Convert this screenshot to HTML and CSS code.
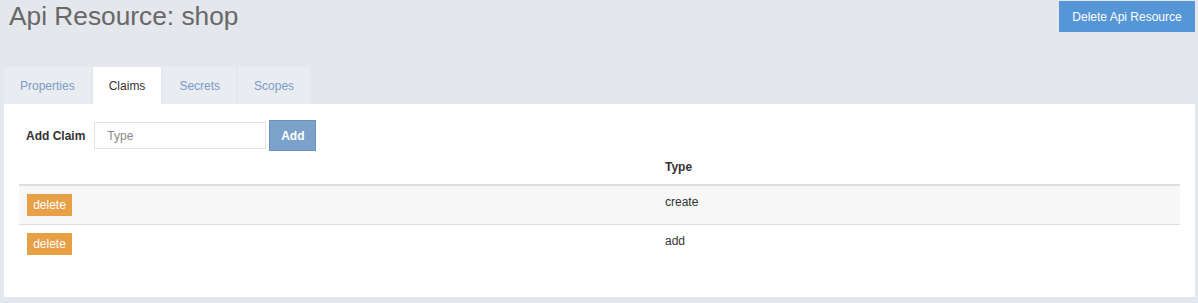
FILE: index.html
```html
<!DOCTYPE html>
<html lang="en">
<head>
    <meta charset="UTF-8">
    <meta name="viewport" content="width=device-width, initial-scale=1.0">
    <title>Api Resource: shop</title>
    <link rel="stylesheet" href="styles.css">
</head>
<body>
    <div class="page">
        <div class="page-header">
            <h1 class="page-title">Api Resource: shop</h1>
            <button class="btn btn-primary">Delete Api Resource</button>
        </div>

        <!-- Tabs -->
        <ul class="tabs">
            <li class="tab">Properties</li>
            <li class="tab active">Claims</li>
            <li class="tab">Secrets</li>
            <li class="tab">Scopes</li>
        </ul>

        <div class="panel">
            <form class="add-form" onsubmit="return false">
                <label class="add-label">Add Claim</label>
                <input class="add-input" type="text" placeholder="Type">
                <button class="btn btn-add">Add</button>
            </form>

            <table class="claims-table">
                <thead>
                    <tr>
                        <th class="col-action"></th>
                        <th>Type</th>
                    </tr>
                </thead>
                <tbody>
                    <tr class="striped">
                        <td><button class="btn btn-delete">delete</button></td>
                        <td>create</td>
                    </tr>
                    <tr>
                        <td><button class="btn btn-delete">delete</button></td>
                        <td>add</td>
                    </tr>
                </tbody>
            </table>
        </div>
    </div>
</body>
</html>
```

FILE: styles.css
```css
* {
    margin: 0;
    padding: 0;
    box-sizing: border-box;
}
body {
    background: #e4e7eb;
    font-family: "Liberation Sans", Arial, sans-serif;
    font-size: 12px;
    color: #333;
}
.page {
    padding: 1px 3px 0 4px;
}
.page-header {
    display: flex;
    justify-content: space-between;
    align-items: flex-start;
}
.page-title {
    font-size: 26.3px;
    font-weight: normal;
    line-height: 30px;
    color: #686868;
    padding-left: 5px;
}
.btn {
    font-family: inherit;
    font-size: 12px;
    border: none;
    color: white;
    cursor: pointer;
}
.btn-primary {
    background: #5596d6;
    width: 136px;
    height: 31px;
}
.tabs {
    list-style: none;
    display: flex;
    gap: 2px;
    margin-top: 35px;
}
.tab {
    background: #e9ecf0;
    color: #7a9cc8;
    padding: 11px 16px 9px;
    line-height: 17px;
}
.tab.active {
    background: white;
    color: #333;
}
.panel {
    background: white;
    padding: 16px 15px 14px;
    box-shadow: 0 2px 0 #d3d7dc;
}
.add-form {
    display: flex;
    align-items: center;
    padding-left: 7px;
}
.add-label {
    font-weight: bold;
    margin-right: 9px;
}
.add-input {
    width: 172px;
    height: 27px;
    border: 1px solid #e3e3e3;
    padding: 0 12px;
    font-family: inherit;
    font-size: 12px;
    color: #555;
    outline: none;
}
.add-input::placeholder {
    color: #8a8a8a;
}
.btn-add {
    background: #7ca2cb;
    border: 1px solid #6d93bd;
    font-weight: bold;
    width: 47px;
    height: 31px;
    margin-left: 3px;
}
.claims-table {
    width: 100%;
    border-collapse: collapse;
    margin-bottom: 20px;
}
.claims-table th,
.claims-table td {
    text-align: left;
    vertical-align: top;
    padding: 8px;
    line-height: 17px;
}
.claims-table th {
    border-bottom: 2px solid #dddddd;
}
.claims-table td {
    border-bottom: 1px solid #dddddd;
}
.claims-table tbody tr:last-child td {
    border-bottom: none;
}
.col-action {
    width: 638px;
}
.striped {
    background: #f7f7f7;
}
.btn-delete {
    background: #e8a047;
    height: 22px;
    width: 45px;
    display: block;
}
```
